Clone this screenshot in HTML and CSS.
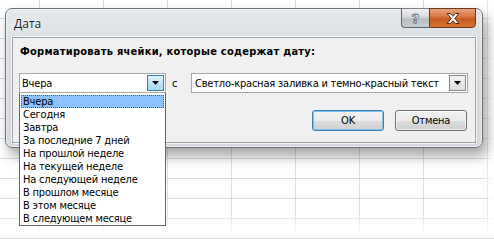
FILE: index.html
```html
<!DOCTYPE html>
<html lang="ru">
<head>
<meta charset="utf-8">
<title>Дата</title>
<link rel="stylesheet" href="styles.css">
</head>
<body>
<div class="screen">
  <div class="dialog">
    <div class="titlebar">
      <span class="title">Дата</span>
      <div class="caption-buttons">
        <div class="cap-btn help">?</div>
        <div class="cap-btn close">
          <svg width="18" height="13" viewBox="0 0 18 13"><path d="M3 1.5h3.4l2.6 2.8 2.6-2.8h3.4l-4.2 5 4.2 5h-3.4l-2.6-2.8-2.6 2.8h-3.4l4.2-5z" fill="#ffffff" stroke="#5a2a14" stroke-width="1" stroke-linejoin="round"/></svg>
        </div>
      </div>
    </div>
    <div class="panel">
      <div class="heading">Форматировать ячейки, которые содержат дату:</div>
      <div class="row">
        <div class="combo combo-open">
          <span class="combo-value">Вчера</span>
          <span class="combo-arrow arrow-hot"><svg width="7" height="4" viewBox="0 0 7 4"><path d="M0 0h7l-3.5 4z" fill="#000"/></svg></span>
          <ul class="listbox">
            <li class="option selected">Вчера</li>
            <li class="option">Сегодня</li>
            <li class="option">Завтра</li>
            <li class="option">За последние 7 дней</li>
            <li class="option">На прошлой неделе</li>
            <li class="option">На текущей неделе</li>
            <li class="option">На следующей неделе</li>
            <li class="option">В прошлом месяце</li>
            <li class="option">В этом месяце</li>
            <li class="option">В следующем месяце</li>
          </ul>
        </div>
        <span class="with">с</span>
        <div class="combo combo-wide">
          <span class="combo-value">Светло-красная заливка и темно-красный текст</span>
          <span class="combo-arrow"><svg width="7" height="4" viewBox="0 0 7 4"><path d="M0 0h7l-3.5 4z" fill="#000"/></svg></span>
        </div>
      </div>
      <div class="actions">
        <button class="btn btn-default">OK</button>
        <button class="btn">Отмена</button>
      </div>
    </div>
  </div>
</div>
</body>
</html>
```

FILE: styles.css
```css
html, body {
  margin: 0;
  padding: 0;
}
body {
  width: 494px;
  height: 237px;
  overflow: hidden;
  font-family: "DejaVu Sans Condensed", "Liberation Sans", sans-serif;
  font-size: 11px;
  letter-spacing: -0.2px;
  color: #000;
  background-color: #fff;
  background-image:
    linear-gradient(to bottom, rgba(255,255,255,0) 212px, #fff 236px),
    linear-gradient(to right, rgba(255,255,255,0) 484px, #fff 494px),
    linear-gradient(to right, #dadcde 1px, transparent 1px),
    linear-gradient(to bottom, #dadcde 1px, transparent 1px);
  background-size: 100% 100%, 100% 100%, 64px 100%, 100% 20px;
  background-position: 0 0, 0 0, 39px 0, 0 18px;
  background-repeat: no-repeat, no-repeat, repeat-x, repeat-y;
}
.screen {
  padding: 8px 0 0 5px;
}
.dialog {
  box-sizing: border-box;
  width: 478px;
  height: 140px;
  border: 1px solid #6b7075;
  border-radius: 7px;
  padding: 0 6px 4px 6px;
  background: linear-gradient(to bottom, #e6e9ec 0%, #d9dde1 30%, #d5d9dd 100%);
  box-shadow: 4px 8px 13px rgba(0,0,0,0.36), inset 0 0 0 1px rgba(255,255,255,0.55);
}
.titlebar {
  height: 28px;
  display: flex;
  align-items: center;
  justify-content: space-between;
}
.title {
  padding-left: 2px;
  font-family: "Open Sans", "Noto Sans", sans-serif;
  font-size: 12px;
  letter-spacing: 0;
  color: #1b1b1b;
  text-shadow: 0 0 8px #fff, 0 0 4px #fff;
}
.caption-buttons {
  align-self: flex-start;
  margin-top: -1px;
  display: flex;
}
.cap-btn {
  box-sizing: border-box;
  height: 20px;
  border: 1px solid #5f6468;
  border-top-color: #7d8286;
  display: flex;
  align-items: center;
  justify-content: center;
}
.help {
  width: 28px;
  border-right: none;
  border-radius: 0 0 0 4px;
  background: linear-gradient(to bottom, #eef0f2 0%, #d6d9dc 45%, #b9bdc1 55%, #c9cdd1 100%);
  font-family: "DejaVu Sans", sans-serif;
  font-weight: bold;
  font-size: 13px;
  letter-spacing: 0;
  color: #fff;
  -webkit-text-stroke: 0.8px #5d6267;
  line-height: 1;
}
.close {
  width: 47px;
  border-radius: 0 0 4px 0;
  border-color: #6b3a22;
  background: linear-gradient(to bottom, #e9a27d 0%, #d87a47 40%, #c65a1f 55%, #d77535 100%);
}
.close svg {
  display: block;
}
.panel {
  box-sizing: border-box;
  height: 106px;
  border: 1px solid #9ea4aa;
  background: #f0f0f0;
  padding: 7px 7px 11px 6px;
  box-shadow: 0 0 0 1px rgba(255,255,255,0.7);
}
.heading {
  margin-left: 1px;
  height: 14px;
  line-height: 14px;
  font-weight: bold;
  letter-spacing: 0.25px;
  white-space: nowrap;
}
.row {
  margin-top: 14px;
  display: flex;
  align-items: center;
  height: 20px;
}
.combo {
  position: relative;
  box-sizing: border-box;
  height: 20px;
  border: 1px solid #a5a9ae;
  background: #fff;
  display: flex;
  align-items: center;
  padding: 0 1px 0 2px;
}
.combo-open {
  width: 147px;
}
.combo-wide {
  width: 277px;
  padding-left: 3px;
}
.combo-value {
  flex: 1;
  white-space: nowrap;
  overflow: hidden;
}
.combo-arrow {
  box-sizing: border-box;
  width: 17px;
  height: 16px;
  border: 1px solid #868a8e;
  background: linear-gradient(to bottom, #f5f5f5, #dedede);
  display: flex;
  align-items: center;
  justify-content: center;
}
.arrow-hot {
  border-color: #3c7fb1;
  background: linear-gradient(to bottom, #e2f3fc 0%, #bfe4f7 50%, #a6d8f3 100%);
}
.with {
  box-sizing: border-box;
  width: 25px;
  padding-left: 6px;
}
.listbox {
  position: absolute;
  top: 19px;
  left: -1px;
  width: 147px;
  box-sizing: border-box;
  margin: 0;
  padding: 2px 0 0 0;
  list-style: none;
  background: #fff;
  border: 1px solid #646464;
  border-top: none;
  z-index: 2;
}
.option {
  height: 13px;
  line-height: 13px;
  padding-left: 2px;
  margin: 0 1px;
  white-space: nowrap;
}
.selected {
  box-sizing: border-box;
  background: #8cc2ff;
  outline: 1px dotted #6d5a3a;
  outline-offset: -1px;
}
.actions {
  margin-top: 17px;
  display: flex;
  justify-content: flex-end;
  gap: 11px;
  padding-right: 1px;
}
.btn {
  box-sizing: border-box;
  width: 72px;
  height: 21px;
  padding: 0;
  font-family: inherit;
  font-size: 11px;
  letter-spacing: inherit;
  color: #000;
  border: 1px solid #707070;
  border-radius: 3px;
  background: linear-gradient(to bottom, #f2f2f2 0%, #ebebeb 50%, #dddddd 51%, #cfcfcf 100%);
  box-shadow: inset 0 0 0 1px rgba(255,255,255,0.6);
}
.btn-default {
  border-color: #3c7fb1;
  box-shadow: inset 0 0 0 1px #7ac3ea;
}
```
